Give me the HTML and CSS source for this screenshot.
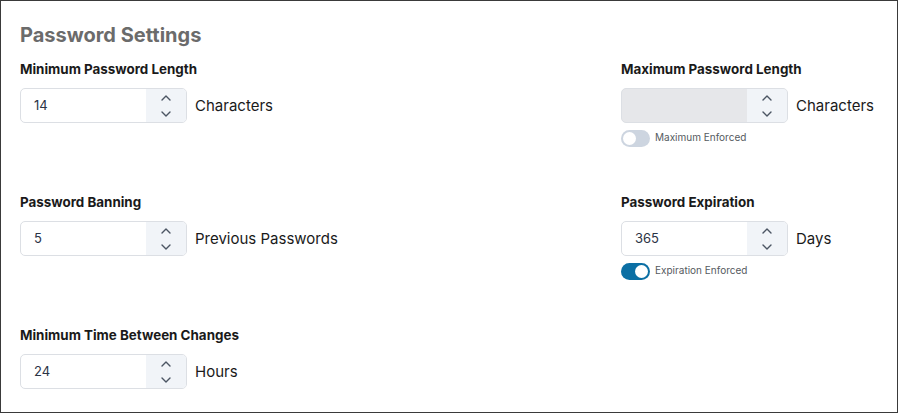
FILE: index.html
```html
<!DOCTYPE html>
<html lang="en">
<head>
<meta charset="utf-8">
<title>Password Settings</title>
<link rel="stylesheet" href="styles.css">
</head>
<body>
<div class="frame">
  <h1 class="title">Password Settings</h1>
  <div class="grid">
    <div class="field">
      <div class="label">Minimum Password Length</div>
      <div class="row">
        <div class="spin"><span class="value">14</span><span class="arrows"><svg width="10" height="6" viewBox="0 0 10 6"><path d="M1 5 L5 1 L9 5" fill="none" stroke="#4b5563" stroke-width="1.4" stroke-linecap="round" stroke-linejoin="round"/></svg><svg width="10" height="6" viewBox="0 0 10 6"><path d="M1 1 L5 5 L9 1" fill="none" stroke="#4b5563" stroke-width="1.4" stroke-linecap="round" stroke-linejoin="round"/></svg></span></div>
        <span class="unit">Characters</span>
      </div>
    </div>
    <div class="field">
      <div class="label">Maximum Password Length</div>
      <div class="row">
        <div class="spin disabled"><span class="value"></span><span class="arrows"><svg width="10" height="6" viewBox="0 0 10 6"><path d="M1 5 L5 1 L9 5" fill="none" stroke="#4b5563" stroke-width="1.4" stroke-linecap="round" stroke-linejoin="round"/></svg><svg width="10" height="6" viewBox="0 0 10 6"><path d="M1 1 L5 5 L9 1" fill="none" stroke="#4b5563" stroke-width="1.4" stroke-linecap="round" stroke-linejoin="round"/></svg></span></div>
        <span class="unit">Characters</span>
      </div>
      <div class="toggle-row"><span class="toggle"><span class="knob"></span></span><span class="toggle-text">Maximum Enforced</span></div>
    </div>
    <div class="field">
      <div class="label">Password Banning</div>
      <div class="row">
        <div class="spin"><span class="value">5</span><span class="arrows"><svg width="10" height="6" viewBox="0 0 10 6"><path d="M1 5 L5 1 L9 5" fill="none" stroke="#4b5563" stroke-width="1.4" stroke-linecap="round" stroke-linejoin="round"/></svg><svg width="10" height="6" viewBox="0 0 10 6"><path d="M1 1 L5 5 L9 1" fill="none" stroke="#4b5563" stroke-width="1.4" stroke-linecap="round" stroke-linejoin="round"/></svg></span></div>
        <span class="unit">Previous Passwords</span>
      </div>
    </div>
    <div class="field">
      <div class="label">Password Expiration</div>
      <div class="row">
        <div class="spin"><span class="value">365</span><span class="arrows"><svg width="10" height="6" viewBox="0 0 10 6"><path d="M1 5 L5 1 L9 5" fill="none" stroke="#4b5563" stroke-width="1.4" stroke-linecap="round" stroke-linejoin="round"/></svg><svg width="10" height="6" viewBox="0 0 10 6"><path d="M1 1 L5 5 L9 1" fill="none" stroke="#4b5563" stroke-width="1.4" stroke-linecap="round" stroke-linejoin="round"/></svg></span></div>
        <span class="unit">Days</span>
      </div>
      <div class="toggle-row"><span class="toggle on"><span class="knob"></span></span><span class="toggle-text">Expiration Enforced</span></div>
    </div>
    <div class="field">
      <div class="label">Minimum Time Between Changes</div>
      <div class="row">
        <div class="spin"><span class="value">24</span><span class="arrows"><svg width="10" height="6" viewBox="0 0 10 6"><path d="M1 5 L5 1 L9 5" fill="none" stroke="#4b5563" stroke-width="1.4" stroke-linecap="round" stroke-linejoin="round"/></svg><svg width="10" height="6" viewBox="0 0 10 6"><path d="M1 1 L5 5 L9 1" fill="none" stroke="#4b5563" stroke-width="1.4" stroke-linecap="round" stroke-linejoin="round"/></svg></span></div>
        <span class="unit">Hours</span>
      </div>
    </div>
  </div>
</div>
</body>
</html>
```
FILE: styles.css
```css
html, body {
  margin: 0;
  padding: 0;
  background: #ffffff;
}
body {
  font-family: Inter, "Noto Sans", sans-serif;
  color: #1f2328;
}
.frame {
  box-sizing: border-box;
  width: 898px;
  height: 413px;
  overflow: hidden;
  border: 1px solid #3a3a3a;
  padding: 22px 19px 0 19px;
}
.title {
  margin: 0;
  font-size: 20px;
  line-height: 24px;
  font-weight: 700;
  color: #6b6b6b;
}
.grid {
  display: grid;
  grid-template-columns: 601px 1fr;
  grid-template-rows: 133px 133px auto;
  margin-top: 14px;
}
.field {
  display: flex;
  flex-direction: column;
}
.label {
  font-size: 13.4px;
  line-height: 16px;
  font-weight: 700;
  color: #1a1a1a;
  margin-bottom: 11px;
}
.row {
  display: flex;
  align-items: center;
  gap: 8px;
}
.spin {
  box-sizing: border-box;
  width: 167px;
  height: 35px;
  border: 1px solid #dcdfe4;
  border-radius: 5px;
  display: flex;
  overflow: hidden;
  background: #ffffff;
}
.spin.disabled {
  background: #e6e7ea;
}
.value {
  flex: 1;
  padding-left: 13px;
  font-size: 13px;
  line-height: 33px;
  color: #2b3445;
}
.arrows {
  width: 40px;
  background: #f1f4f8;
  display: flex;
  flex-direction: column;
  align-items: center;
  justify-content: center;
  gap: 10px;
}
.arrows svg {
  display: block;
}
.unit {
  font-size: 15px;
  color: #1a1a1a;
  padding-bottom: 1px;
}
.toggle-row {
  display: flex;
  align-items: center;
  gap: 5px;
  margin-top: 7px;
}
.toggle {
  box-sizing: border-box;
  width: 29px;
  height: 17px;
  border-radius: 9px;
  background: #cdd5e0;
  padding: 2px;
  display: flex;
}
.toggle.on {
  background: #0b6fa4;
  justify-content: flex-end;
}
.knob {
  width: 13px;
  height: 13px;
  border-radius: 50%;
  background: #ffffff;
}
.toggle-text {
  font-size: 10px;
  color: #555a60;
  padding-bottom: 4px;
}
```
